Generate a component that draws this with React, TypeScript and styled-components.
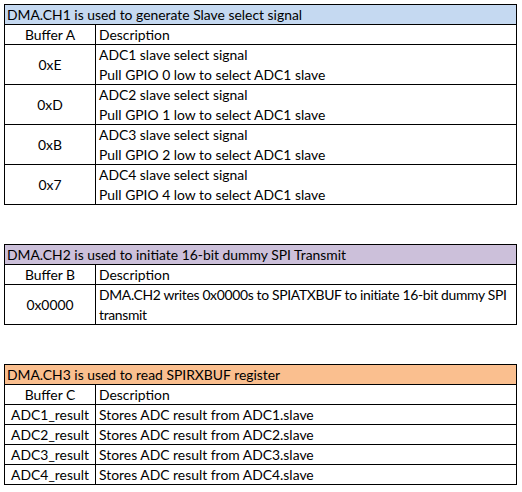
import React from "react";
import styled, { createGlobalStyle } from "styled-components";

const Global = createGlobalStyle`
  html, body { margin: 0; padding: 0; background: #ffffff; }
  body { font-family: Lato, "Open Sans", sans-serif; color: #000; }
`;

const Page = styled.div`
  display: flex;
  flex-direction: column;
  gap: 39px;
  padding: 4px 0 0 4px;
  width: 513px;
`;

const Table = styled.div`
  border: 1px solid #000;
  display: flex;
  flex-direction: column;
  font-size: 13.9px;
`;

const Title = styled.div<{ $bg: string }>`
  background: ${(p) => p.$bg};
  height: 19px;
  line-height: 19px;
  padding-left: 2px;
  white-space: nowrap;
`;

const Row = styled.div<{ $h: number }>`
  display: grid;
  grid-template-columns: 90px 1fr;
  border-top: 1px solid #000;
  height: ${(p) => p.$h}px;
`;

const KeyCell = styled.div`
  display: flex;
  align-items: center;
  justify-content: center;
  white-space: nowrap;
`;

const DescCell = styled.div`
  border-left: 1px solid #000;
  padding-left: 3px;
  line-height: 20px;
  display: flex;
  flex-direction: column;
  justify-content: center;
  white-space: nowrap;
  overflow: hidden;
`;

const Line = styled.span<{ $tight?: boolean }>`
  letter-spacing: ${(p) => (p.$tight ? "-0.32px" : "normal")};
`;

type RowData = { key: string; lines: string[]; tight?: boolean };

const tables: { title: string; bg: string; col: string; rows: RowData[] }[] = [
  {
    title: "DMA.CH1 is used to generate Slave select signal",
    bg: "#c5d9f1",
    col: "Buffer A",
    rows: [
      { key: "0xE", lines: ["ADC1 slave select signal", "Pull GPIO 0 low to select ADC1 slave"] },
      { key: "0xD", lines: ["ADC2 slave select signal", "Pull GPIO 1 low to select ADC1 slave"] },
      { key: "0xB", lines: ["ADC3 slave select signal", "Pull GPIO 2 low to select ADC1 slave"] },
      { key: "0x7", lines: ["ADC4 slave select signal", "Pull GPIO 4 low to select ADC1 slave"] },
    ],
  },
  {
    title: "DMA.CH2 is used to initiate 16-bit dummy SPI Transmit",
    bg: "#ccc0da",
    col: "Buffer B",
    rows: [
      {
        key: "0x0000",
        lines: ["DMA.CH2 writes 0x0000s to SPIATXBUF to initiate 16-bit dummy SPI", "transmit"],
        tight: true,
      },
    ],
  },
  {
    title: "DMA.CH3 is used to read SPIRXBUF register",
    bg: "#fabf8f",
    col: "Buffer C",
    rows: [
      { key: "ADC1_result", lines: ["Stores ADC result from ADC1.slave"] },
      { key: "ADC2_result", lines: ["Stores ADC result from ADC2.slave"] },
      { key: "ADC3_result", lines: ["Stores ADC result from ADC3.slave"] },
      { key: "ADC4_result", lines: ["Stores ADC result from ADC4.slave"] },
    ],
  },
];

export default function App() {
  return (
    <>
      <Global />
      <Page>
        {tables.map((t) => (
          <Table key={t.title}>
            <Title $bg={t.bg}>{t.title}</Title>
            <Row $h={19}>
              <KeyCell>{t.col}</KeyCell>
              <DescCell>Description</DescCell>
            </Row>
            {t.rows.map((r) => (
              <Row key={r.key} $h={r.lines.length * 20 - 1}>
                <KeyCell>{r.key}</KeyCell>
                <DescCell>
                  {r.lines.map((l) => (
                    <Line key={l} $tight={r.tight}>
                      {l}
                    </Line>
                  ))}
                </DescCell>
              </Row>
            ))}
          </Table>
        ))}
      </Page>
    </>
  );
}
